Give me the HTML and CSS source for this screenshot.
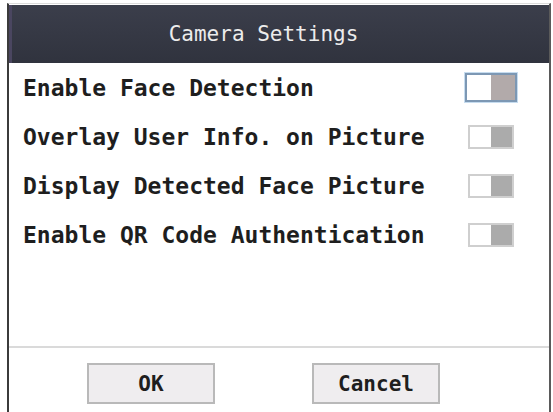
FILE: index.html
```html
<!DOCTYPE html>
<html lang="en">
<head>
  <meta charset="UTF-8" />
  <meta name="viewport" content="width=device-width, initial-scale=1.0" />
  <title>Camera Settings</title>
  <link rel="stylesheet" href="styles.css">
</head>
<body>

  <div class="dialog">
    <div class="dialog-header">Camera Settings</div>

    <div class="settings-list">
      <div class="setting-row">
        <span class="setting-label">Enable Face Detection</span>
        <span class="toggle focused"><span class="toggle-on"></span><span class="toggle-off"></span></span>
      </div>
      <div class="setting-row">
        <span class="setting-label">Overlay User Info. on Picture</span>
        <span class="toggle"><span class="toggle-on"></span><span class="toggle-off"></span></span>
      </div>
      <div class="setting-row">
        <span class="setting-label">Display Detected Face Picture</span>
        <span class="toggle"><span class="toggle-on"></span><span class="toggle-off"></span></span>
      </div>
      <div class="setting-row">
        <span class="setting-label">Enable QR Code Authentication</span>
        <span class="toggle"><span class="toggle-on"></span><span class="toggle-off"></span></span>
      </div>
    </div>

    <div class="dialog-footer">
      <button class="btn">OK</button>
      <button class="btn">Cancel</button>
    </div>
  </div>

</body>
</html>
```

FILE: styles.css
```css
* {
  box-sizing: border-box;
  margin: 0;
  padding: 0;
}

body {
  background: #fff;
  font-family: 'DejaVu Sans Mono', 'Liberation Mono', monospace;
  overflow: hidden;
}

.dialog {
  margin: 3px 2px 0 7px;
  border-top: 1px solid #dcdcdc;
  border-left: 2px solid #3b3b3b;
  border-right: 2px solid #5a5a5a;
  height: 420px;
  display: flex;
  flex-direction: column;
}

.dialog-header {
  height: 58px;
  margin-top: 1px;
  padding-right: 34px;
  background: linear-gradient(180deg, #3b3e4b 0%, #30333e 100%);
  border-left: 3px solid #4a4660;
  color: #ececec;
  font-size: 21px;
  display: flex;
  align-items: center;
  justify-content: center;
}

.settings-list {
  height: 283px;
  padding: 0 32px 0 14px;
}

.setting-row {
  height: 49px;
  display: flex;
  align-items: center;
  justify-content: space-between;
}

.setting-label {
  font-size: 23px;
  font-weight: bold;
  color: #1e1e1e;
}

.toggle {
  width: 46px;
  height: 24px;
  border: 2px solid #cfcfcf;
  display: flex;
  margin-right: 3px;
}

.toggle-on {
  flex: 1;
  background: #fff;
}

.toggle-off {
  flex: 1;
  background: #ababab;
}

.toggle.focused {
  width: 52px;
  height: 29px;
  margin-right: 0;
  border: 2px solid #7d98b4;
  box-shadow: 0 0 0 1px #c6dcef;
}

.toggle.focused .toggle-off {
  background: #b2aaaa;
}

.dialog-footer {
  border-top: 2px solid #dadada;
  padding: 15px 0 0 78px;
  display: flex;
  gap: 97px;
}

.btn {
  width: 128px;
  height: 41px;
  background: #efedef;
  border: 2px solid #b9b9b9;
  font-family: 'DejaVu Sans Mono', 'Liberation Mono', monospace;
  font-size: 21px;
  font-weight: bold;
  color: #1e1e1e;
}
```
